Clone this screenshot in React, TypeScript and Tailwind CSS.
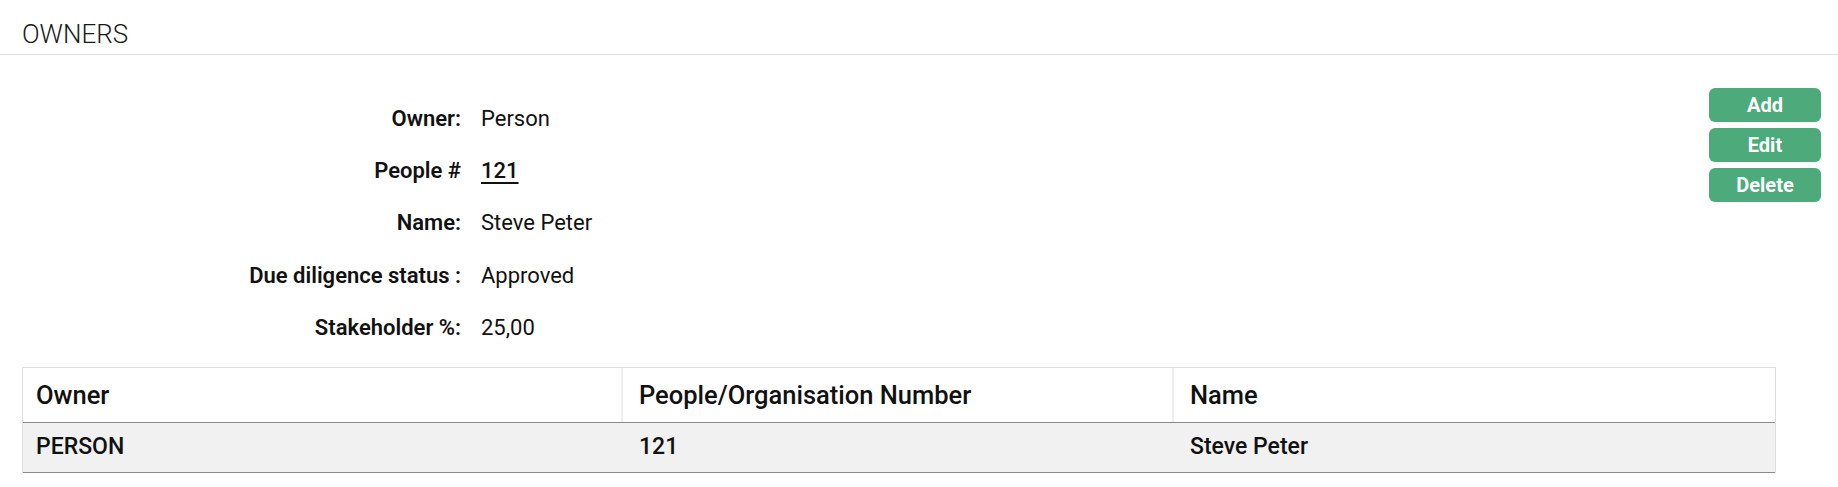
export default function App() {
  const rows = [
    { label: "Owner:", value: "Person" },
    { label: "People #", value: "121", link: true },
    { label: "Name:", value: "Steve Peter" },
    { label: "Due diligence status :", value: "Approved" },
    { label: "Stakeholder %:", value: "25,00" },
  ];
  return (
    <div className="w-[1838px] h-[487px] overflow-hidden bg-white text-[#111] [font-family:Roboto,'Noto_Sans',sans-serif]">
      <div className="pt-[14px] border-b border-[#dddddd]">
        <h1 className="pl-[22px] h-[40px] leading-[40px] text-[26px] font-light text-[#1a1a1a]">OWNERS</h1>
      </div>

      <div className="flex items-start justify-between">
        <div className="pt-[37px]">
          {rows.map((r) => (
            <div key={r.label} className="flex items-center h-[52.4px]">
              <div className="w-[461px] text-right text-[22px] font-semibold">{r.label}</div>
              <div className="pl-[20px] text-[22px] font-normal">
                {r.link ? (
                  <a href="#" className="underline underline-offset-[4px] decoration-[2px] font-medium">{r.value}</a>
                ) : (
                  r.value
                )}
              </div>
            </div>
          ))}
        </div>
        <div className="pt-[33px] pr-[17px] flex flex-col gap-[6px]">
          {["Add", "Edit", "Delete"].map((b) => (
            <button
              key={b}
              className="w-[112px] h-[34px] rounded-[6px] bg-[#4caa7b] text-white text-[20px] font-bold leading-none"
            >
              {b}
            </button>
          ))}
        </div>
      </div>

      <div className="ml-[22px] mt-[13px] w-[1754px] border-x border-t border-[#dedede]">
        <div className="flex h-[55px] border-b border-[#8a8a8a] text-[25.5px] font-medium">
          <div className="w-[598px] pl-[13px] flex items-center">Owner</div>
          <div className="w-[551px] pl-[16px] border-l-2 border-[#eeeeee] flex items-center">People/Organisation Number</div>
          <div className="flex-1 pl-[16px] border-l-2 border-[#eeeeee] flex items-center">Name</div>
        </div>
        <div className="flex h-[50px] bg-[#f1f1f1] border-b border-[#8a8a8a] text-[23px] font-medium">
          <div className="w-[598px] pl-[13px] flex items-center">PERSON</div>
          <div className="w-[551px] pl-[18px] flex items-center">121</div>
          <div className="flex-1 pl-[18px] flex items-center">Steve Peter</div>
        </div>
      </div>
    </div>
  );
}
